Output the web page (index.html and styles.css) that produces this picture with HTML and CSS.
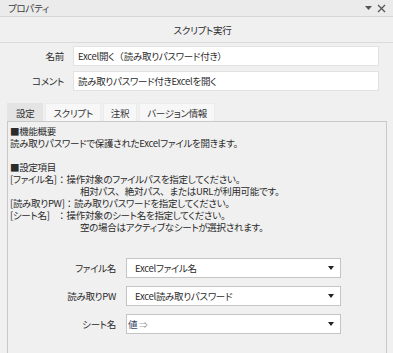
FILE: index.html
```html
<!DOCTYPE html>
<html lang="ja">

<head>
    <meta charset="UTF-8">
    <meta name="viewport" content="width=device-width, initial-scale=1.0">
    <title>プロパティ</title>
    <link rel="stylesheet" href="styles.css">
</head>

<body>
    <div class="pane">
        <!-- タイトルバー -->
        <div class="titlebar">
            <span>プロパティ</span>
            <div class="win-btns">
                <svg width="7" height="4" viewBox="0 0 7 4"><path d="M0 0H7L3.5 4Z" fill="#555"/></svg>
                <svg width="9" height="9" viewBox="0 0 9 9"><path d="M1 1L8 8M8 1L1 8" stroke="#555" stroke-width="1.3"/></svg>
            </div>
        </div>

        <div class="caption">スクリプト実行</div>

        <div class="fields">
            <div class="field-row">
                <label>名前</label>
                <div class="textbox">Excel開く<span class="fw">（</span>読み取りパスワード付き<span class="fw">）</span></div>
            </div>
            <div class="field-row">
                <label>コメント</label>
                <div class="textbox">読み取りパスワード付きExcelを開く</div>
            </div>
        </div>

        <!-- タブ -->
        <div class="tabs">
            <div class="tab active">設定</div>
            <div class="tab">スクリプト</div>
            <div class="tab">注釈</div>
            <div class="tab">バージョン情報</div>
        </div>

        <div class="tab-body">
            <div class="desc">
                <div>■機能概要</div>
                <div>読み取りパスワードで保護されたExcelファイルを開きます。</div>
                <div>&nbsp;</div>
                <div>■設定項目</div>
                <div><span class="key">[ファイル名]</span><span class="fw">：</span>操作対象のファイルパスを指定してください。</div>
                <div class="indent">相対パス<span class="fw">、</span>絶対パス<span class="fw">、</span>またはURLが利用可能です。</div>
                <div>[読み取りPW]<span class="fw">：</span>読み取りパスワードを指定してください。</div>
                <div><span class="key">[シート名]</span><span class="fw">：</span>操作対象のシート名を指定してください。</div>
                <div class="indent">空の場合はアクティブなシートが選択されます。</div>
            </div>

            <div class="form">
                <div class="form-row">
                    <label>ファイル名</label>
                    <div class="combo"><span>Excelファイル名</span><i class="arrow"></i></div>
                </div>
                <div class="form-row">
                    <label>読み取りPW</label>
                    <div class="combo"><span>Excel読み取りパスワード</span><i class="arrow"></i></div>
                </div>
                <div class="form-row">
                    <label>シート名</label>
                    <div class="combo value"><span><b>値</b><em>⇒</em></span><i class="arrow"></i></div>
                </div>
            </div>
        </div>
    </div>
</body>

</html>
```

FILE: styles.css
```css
body {
    margin: 0;
    padding: 0;
    background-color: #f0f0f0;
    font-family: "Noto Sans CJK JP", "Noto Sans", sans-serif;
    font-size: 9.5px;
    letter-spacing: -0.3px;
    font-feature-settings: "palt";
    color: #2b2b2b;
}

/* 全角のまま表示する約物 */
.fw {
    font-feature-settings: normal;
    letter-spacing: 0;
}

.pane {
    width: 393px;
    height: 353px;
    overflow: hidden;
}

.titlebar {
    display: flex;
    justify-content: space-between;
    align-items: center;
    height: 16px;
    padding: 0 7px 0 8px;
    background-color: #ebebeb;
    border-bottom: 1px solid #d6d6d6;
    color: #3a3a3a;
}

.win-btns {
    display: flex;
    align-items: center;
    gap: 5px;
}

.caption {
    height: 25px;
    line-height: 27px;
    text-align: center;
    padding-left: 12px;
    border-bottom: 1px solid #dadada;
}

.fields {
    display: flex;
    flex-direction: column;
    gap: 5px;
    padding-top: 3px;
}

.field-row {
    display: flex;
    align-items: center;
    gap: 9px;
}

.field-row label {
    width: 64px;
    text-align: right;
}

.textbox {
    width: 300px;
    height: 18px;
    line-height: 19px;
    padding-left: 4px;
    background-color: #fff;
    border: 1px solid #e2e2e2;
}

/* タブ */
.tabs {
    display: flex;
    gap: 2px;
    margin-top: 12px;
    padding-left: 7px;
}

.tab {
    height: 17px;
    line-height: 18px;
    padding: 0 7px;
    background-color: #f7f7f7;
    border: 1px solid #ececec;
    border-bottom: none;
    color: #333;
}

.tab.active {
    padding: 0 8px;
    background-color: #e4e4e4;
    border-color: #e4e4e4;
}

.tab-body {
    margin-left: 7px;
    width: 376px;
    height: 240px;
    padding-left: 2px;
    border: 1px solid #c9c9c9;
    border-bottom: none;
}

.desc {
    padding-top: 3px;
    line-height: 12px;
    white-space: nowrap;
}

.indent {
    padding-left: 70px;
}

.key {
    display: inline-block;
    width: 47px;
}

.form {
    display: flex;
    flex-direction: column;
    gap: 8px;
    margin-top: 25px;
}

.form-row {
    display: flex;
    align-items: center;
    gap: 10px;
}

.form-row label {
    width: 106px;
    flex-shrink: 0;
    text-align: right;
}

.combo {
    display: flex;
    justify-content: space-between;
    align-items: center;
    flex-shrink: 0;
    box-sizing: border-box;
    width: 215px;
    height: 20px;
    padding-left: 8px;
    background-color: #fff;
    border: 1px solid #c4c4c4;
}

.combo.value {
    padding-left: 1px;
}

.combo b {
    font-weight: normal;
    color: #3b4a68;
}

.combo em {
    font-style: normal;
    color: #9a9a9a;
    margin-left: 2px;
    font-size: 8.5px;
}

.arrow {
    width: 0;
    height: 0;
    margin-right: 6px;
    border-left: 3.5px solid transparent;
    border-right: 3.5px solid transparent;
    border-top: 4px solid #222;
}
```
